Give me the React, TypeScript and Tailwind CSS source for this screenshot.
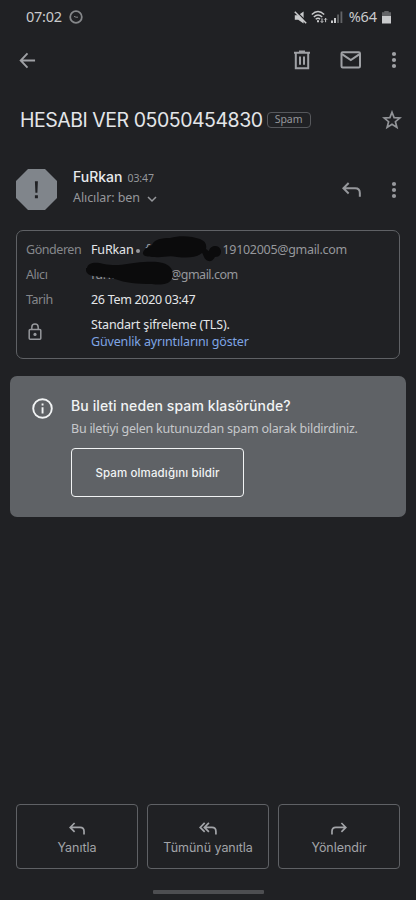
import type { ReactNode } from "react";

const MoreIcon = () => (
  <svg width="6" height="18" viewBox="0 0 6 18" fill="currentColor">
    <circle cx="3" cy="3" r="2.1" />
    <circle cx="3" cy="9" r="2.1" />
    <circle cx="3" cy="15" r="2.1" />
  </svg>
);

const ReplyIcon = ({ className }: { className?: string }) => (
  <svg
    viewBox="0 0 18 14"
    fill="none"
    stroke="currentColor"
    strokeWidth="1.9"
    className={className}
  >
    <path d="M6.3 0.8 1.3 5.8l5 5M1.3 5.8h11.2q4.4 0 4.4 4.4v3.6" />
  </svg>
);

const ReplyAllIcon = () => (
  <svg
    viewBox="0 0 20 14"
    fill="none"
    stroke="currentColor"
    strokeWidth="1.9"
    className="w-[18px] h-[13px]"
  >
    <path d="M6.3 0.8 1.3 5.8l5 5M11 0.8l-5 5 5 5M6 5.8h8.4q4.4 0 4.4 4.4v3.6" />
  </svg>
);

const StatusBar = () => (
  <div className="h-[34px] flex items-center pl-[26px] pr-[25px] text-[#c9cacc] font-['Noto_Sans',sans-serif]">
    <span className="text-[14.5px] tracking-[-0.25px]">07:02</span>
    <svg width="14" height="14" viewBox="0 0 14 14" fill="none" className="ml-[7px]">
      <circle cx="7" cy="7" r="5.8" stroke="#85878a" strokeWidth="1.8" />
      <path d="M5 6.4l2 .8h2" stroke="#85878a" strokeWidth="1" />
    </svg>
    <div className="ml-auto flex items-center">
      <svg width="13" height="13" viewBox="0 0 13 13" className="mr-[4px]">
        <path d="M.8 4.2h3.4L9.6.6v11.8L4.2 8.8H.8z" fill="currentColor" />
        <path d="M1.8 0l11 11" stroke="#202124" strokeWidth="1.4" />
        <path d="M.8.8l11.4 11.4" stroke="currentColor" strokeWidth="1.5" />
      </svg>
      <svg width="17" height="14" viewBox="0 0 17 14" fill="none" stroke="currentColor" strokeWidth="1.4" className="mr-[3px]">
        <path d="M.8 4.4q6.2-5.6 12.4 0M2.8 7q4.2-3.8 8.4 0M4.7 9.3q2.3-2 4.4-.2" />
        <path d="M7 10.3v2" strokeWidth="2" />
        <path d="M11 8.4v4M9.7 11.2l1.3 1.3 1.3-1.3M14.6 12.2V8.4M13.3 9.6l1.3-1.3 1.3 1.3" strokeWidth="1" />
      </svg>
      <svg width="12" height="12" viewBox="0 0 12 12" fill="currentColor" className="mr-[6px]">
        <path d="M0 9.5h2V12H0zM3 7h2v5H3z" />
        <path d="M6.2 3.5h1.7V12H6.2zM9.5.5h1.8V12H9.5z" opacity=".4" />
      </svg>
      <span className="text-[14.5px] tracking-[-0.1px]">%64</span>
      <svg width="9" height="13" viewBox="0 0 9 13" className="ml-[5px]" fill="currentColor">
        <path d="M2.3 0h4.4v1.3H9V5H0V1.3h2.3z" opacity=".4" />
        <path d="M0 5h9v7.5H0z" />
      </svg>
    </div>
  </div>
);

const Toolbar = () => (
  <div className="h-[52px] flex items-center px-[19px] text-[#9fa1a5]">
    <svg width="17" height="17" viewBox="0 0 18 18" fill="none" stroke="currentColor" strokeWidth="2">
      <path d="M9 1.5 1.8 9 9 16.5M1.8 9H17" />
    </svg>
    <svg width="18" height="20" viewBox="0 0 18 20" fill="none" stroke="currentColor" strokeWidth="2" className="ml-auto">
      <path d="M1 2.7h16M6 1.5h6M2.8 3v15.2h12.4V3M7 6.5v8.3M11 6.5v8.3" />
    </svg>
    <svg width="22" height="18" viewBox="0 0 22 18" fill="none" stroke="currentColor" strokeWidth="2" className="ml-[29px] mr-[29px]">
      <rect x="1.5" y="1.3" width="18.5" height="15.2" rx="1.2" />
      <path d="M2 3.2 10.8 9 19.6 3.2" />
    </svg>
    <MoreIcon />
  </div>
);

const Subject = () => (
  <div className="h-[67px] flex items-center pl-[20px] pr-[14px]">
    <h1 className="text-[19.5px] leading-6 tracking-[-0.47px] whitespace-nowrap text-[#e4e6e9] font-['Inter',sans-serif]">
      HESABI VER 05050454830
    </h1>
    <span className="ml-[4px] w-[44px] h-[16px] flex items-center justify-center rounded-[4px] border border-[#56585c] text-[10.5px] leading-none text-[#95979b] font-['Noto_Sans',sans-serif]">
      Spam
    </span>
    <svg width="20" height="20" viewBox="0 0 20 20" fill="none" stroke="#929498" strokeWidth="1.7" className="ml-auto">
      <path d="M10 2.2l2.1 5.4 5.8.4-4.5 3.7 1.5 5.7-4.9-3.2-4.9 3.2 1.5-5.7L2.1 8l5.8-.4z" />
    </svg>
  </div>
);

const Sender = () => (
  <div className="h-[77px] pb-[4px] flex items-center pl-[16px] pr-[19px] text-[#96989c]">
    <svg width="41" height="41" viewBox="0 0 41 41">
      <path d="M12 0h17l12 12v17L29 41H12L0 29V12z" fill="#80858b" />
      <path d="M18.9 12.3h3l-.5 11.5h-2zM18.9 26.2h3v3h-3z" fill="#202124" />
    </svg>
    <div className="ml-[16px] -mt-[6px] font-['Noto_Sans',sans-serif]">
      <div className="flex items-baseline h-[21px]">
        <span className="text-[14px] leading-[21px] font-medium text-[#e8eaed] font-['Inter',sans-serif]">
          FuRkan
        </span>
        <span className="ml-[5px] text-[10.5px] tracking-[-0.1px]">03:47</span>
      </div>
      <div className="flex items-center h-[21px]">
        <span className="text-[12.5px] leading-[21px] tracking-[-0.1px]">Alıcılar: ben</span>
        <svg width="10" height="7" viewBox="0 0 10 7" fill="none" stroke="currentColor" strokeWidth="1.5" className="ml-[7px] mt-[4px]">
          <path d="M1 1l4 4 4-4" />
        </svg>
      </div>
    </div>
    <ReplyIcon className="ml-auto mr-[30px] w-[19px] h-[15px]" />
    <MoreIcon />
  </div>
);

const DetailRow = ({ label, children }: { label: ReactNode; children: ReactNode }) => (
  <div className="flex h-[25px] items-center whitespace-nowrap">
    <div className="w-[65px] shrink-0 tracking-[-0.45px] text-[#85878b]">{label}</div>
    <div className="relative">{children}</div>
  </div>
);

const Details = () => (
  <section className="mx-4 h-[129px] pt-[7px] pl-[9px] rounded-[7px] border border-[#5f6165] text-[12.5px] tracking-[-0.16px] text-[#e4e6e9] font-['Noto_Sans',sans-serif]">
    <DetailRow label="Gönderen">
      <div className="flex items-center">
        <span>FuRkan</span>
        <span className="ml-[3px] size-[4px] rounded-full bg-[#96989c]" />
        <span className="ml-[5px] w-[4px] text-[#96989c]">f</span>
        <span className="ml-[73px] tracking-[-0.3px] text-[#96989c]">19102005@gmail.com</span>
      </div>
      <svg width="80" height="30" viewBox="0 0 80 30" className="absolute left-[51px] -top-[6px]">
        <path d="M1 17.5C2 14 6 12 10 10 12 4 20 3 28 3 38 0 50 1 58 4c5 2 7 5 6 10 2 1 2 2 3 2 1-6 11-7 12 0 0 5-3 6-6 6-3 6-9 5-11 0-1-2-1-3-2-4-6 5-15 5-25 4-9-2-14 1-22 0C5 22 0 21 1 17.5z" fill="#0b0b0c" />
      </svg>
    </DetailRow>
    <DetailRow label="Alıcı">
      <div className="flex text-[#96989c]">
        <span className="w-[79px]">furk</span>
        <span className="tracking-[-0.5px]">@gmail.com</span>
      </div>
      <svg width="88" height="27" viewBox="0 0 88 27" className="absolute -left-[5px] -top-[6px]">
        <path d="M1 8C2 2 10 2 18 4c15 3 24-1 40-2 12-1 22 0 26 5 3 3 4 9 1 13-3 5-12 5-19 4-15 0-27-1-37-5-8-2-14-2-22-3-5-1-8-4-7-8z" fill="#0b0b0c" />
      </svg>
    </DetailRow>
    <DetailRow label="Tarih">
      <span className="tracking-[-0.3px]">26 Tem 2020 03:47</span>
    </DetailRow>
    <div className="-mt-px flex items-center h-[42px] whitespace-nowrap">
      <div className="w-[65px] shrink-0 pl-[2px]">
        <svg width="14" height="18" viewBox="0 0 14 18" fill="none" stroke="#96989c" strokeWidth="1.5" className="-mt-[2px]">
          <rect x="1.2" y="6.5" width="11.6" height="9.8" rx="1" />
          <path d="M3.8 6.3V4.2a3.2 3.2 0 0 1 6.4 0v2.1" />
          <circle cx="7" cy="11.4" r="1.6" fill="#96989c" stroke="none" />
        </svg>
      </div>
      <div className="leading-[17px]">
        <p>Standart şifreleme (TLS).</p>
        <p className="text-[#7fa5e4]">Güvenlik ayrıntılarını göster</p>
      </div>
    </div>
  </section>
);

const SpamNotice = () => (
  <section className="mt-[17px] mx-[10px] h-[141px] pt-[20px] pl-[22px] flex rounded-[7px] bg-[#5f6266]">
    <svg width="21" height="21" viewBox="0 0 21 21" className="mt-[2px] shrink-0">
      <circle cx="10.5" cy="10.5" r="9.3" fill="none" stroke="#f1f3f4" strokeWidth="1.9" />
      <path d="M9.6 5.5h1.9v1.9H9.6zM9.6 9.2h1.9v6.2H9.6z" fill="#f1f3f4" />
    </svg>
    <div className="ml-[18px] whitespace-nowrap">
      <h2 className="text-[14px] leading-[20px] tracking-[0.1px] font-medium text-[#f1f3f4] font-['Inter',sans-serif]">
        Bu ileti neden spam klasöründe?
      </h2>
      <p className="mt-[4px] text-[12.5px] leading-[18px] tracking-[-0.24px] text-[#c6c8cb] font-['Noto_Sans',sans-serif]">
        Bu iletiyi gelen kutunuzdan spam olarak bildirdiniz.
      </p>
      <button className="mt-[10px] w-[173px] h-[49px] pt-[2px] rounded-[4px] border-[1.5px] border-[#f1f3f4] text-[11.5px] tracking-[0.13px] font-medium text-[#f1f3f4] font-['Inter',sans-serif]">
        Spam olmadığını bildir
      </button>
    </div>
  </section>
);

const ActionButton = ({ icon, label }: { icon: ReactNode; label: string }) => (
  <button className="h-[65px] pt-[5px] flex flex-col items-center justify-center gap-[4px] rounded-[4px] border border-[#5f6165] text-[12.5px] leading-[18px] tracking-[-0.04px] text-[#a2a4a8] font-['Inter',sans-serif]">
    {icon}
    {label}
  </button>
);

const App = () => {
  return (
    <main className="w-[416px] h-[900px] flex flex-col overflow-hidden bg-[#202124]">
      <StatusBar />
      <Toolbar />
      <Subject />
      <Sender />
      <Details />
      <SpamNotice />
      <div className="mt-auto mx-4 grid grid-cols-3 gap-[9px]">
        <ActionButton icon={<ReplyIcon className="w-[16px] h-[13px]" />} label="Yanıtla" />
        <ActionButton icon={<ReplyAllIcon />} label="Tümünü yanıtla" />
        <ActionButton icon={<ReplyIcon className="w-[16px] h-[13px] -scale-x-100" />} label="Yönlendir" />
      </div>
      <div className="mt-[21px] mb-[6px] mx-auto w-[111px] h-[4px] rounded-[1px] bg-[#4d4e51]" />
    </main>
  );
};

export default App;
